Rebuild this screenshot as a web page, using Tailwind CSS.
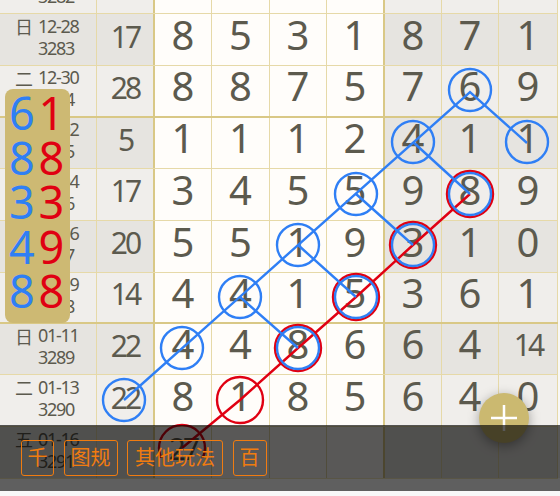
<!DOCTYPE html>
<html lang="zh">
<head>
  <meta charset="UTF-8" />
  <title>走势图</title>
  <script src="https://cdn.jsdelivr.net/npm/@tailwindcss/browser@4"></script>
</head>
<body class="bg-[#f8f8f8] font-['Noto_Sans','Noto_Sans_CJK_SC',sans-serif] text-[#5c5a4e]">
  <div class="relative h-[496px] w-[560px] overflow-hidden">
    <div id="chart" class="relative -mt-[38px] w-[558px]">
      <div id="rows"></div>
      <svg class="absolute left-0 top-[38px]" width="560" height="458" fill="none" stroke-width="2.4">
        <g stroke="#e00012">
          <circle cx="182" cy="448" r="23" />
          <circle cx="240" cy="400" r="23" />
          <circle cx="298" cy="348" r="23" />
          <circle cx="356" cy="297" r="23" />
          <circle cx="413" cy="245" r="23" />
          <circle cx="470" cy="194" r="23" />
          <polyline points="182,448 240,400 298,348 356,297 413,245 470,194" />
        </g>
        <g stroke="#2f7ff5">
          <circle cx="124" cy="400" r="21" />
          <circle cx="182" cy="348" r="21" />
          <circle cx="240" cy="297" r="21" />
          <circle cx="298" cy="245" r="21" />
          <circle cx="356" cy="194" r="21" />
          <circle cx="413" cy="142" r="21" />
          <circle cx="470" cy="90" r="21" />
          <circle cx="527" cy="142" r="21" />
          <circle cx="298" cy="348" r="21" />
          <circle cx="356" cy="297" r="21" />
          <circle cx="413" cy="245" r="21" />
          <circle cx="470" cy="194" r="21" />
          <polyline points="124,400 470,92 527,143" />
          <path d="M240 297 298 348M298 245 356 297M356 194 413 245M413 142 470 194" />
        </g>
      </svg>
    </div>

    <div class="absolute left-[5px] top-[89px] grid h-[234px] w-[65px] grid-cols-2 content-start rounded-lg bg-[#cdb973] pl-[2px] pr-[4px] pt-[2px] text-center text-[45px] leading-[44.5px]">
      <span class="text-[#2f7ff5]">6</span><span class="text-[#e00012]">1</span>
      <span class="text-[#2f7ff5]">8</span><span class="text-[#e00012]">8</span>
      <span class="text-[#2f7ff5]">3</span><span class="text-[#e00012]">3</span>
      <span class="text-[#2f7ff5]">4</span><span class="text-[#e00012]">9</span>
      <span class="text-[#2f7ff5]">8</span><span class="text-[#e00012]">8</span>
    </div>

    <button class="absolute left-[479px] top-[393px] flex h-[50px] w-[50px] items-center justify-center rounded-full bg-[#cbb970] shadow-[0_3px_12px_rgba(0,0,0,0.35)]">
      <svg width="26" height="26" stroke="#fff" stroke-width="2.5"><path d="M0 13H26M13 0V26" /></svg>
    </button>

    <div class="absolute left-0 top-[425px] flex h-[66px] w-full items-start gap-[9.5px] bg-black/65 pl-[21px] pt-[15px]">
      <div class="absolute bottom-0 left-0 h-[13px] w-full bg-white/5"></div>
      <span class="flex h-[36px] w-[33px] items-center justify-center rounded-[3px] border border-[#f07c10] text-[20px] text-[#f07c10]">千</span>
      <span class="flex h-[36px] w-[54px] items-center justify-center rounded-[3px] border border-[#f07c10] text-[20px] text-[#f07c10]">图规</span>
      <span class="flex h-[36px] w-[96px] items-center justify-center rounded-[3px] border border-[#f07c10] text-[20px] text-[#f07c10]">其他玩法</span>
      <span class="flex h-[36px] w-[34px] items-center justify-center rounded-[3px] border border-[#f07c10] text-[20px] text-[#f07c10]">百</span>
    </div>
  </div>

  <script>
    const data = [
      ["", "", "3282", "", "", "", "", "", "", "", ""],
      ["日", "12-28", "3283", "17", "8", "5", "3", "1", "8", "7", "1"],
      ["二", "12-30", "3284", "28", "8", "8", "7", "5", "7", "6", "9"],
      ["四", "01-02", "3285", "5", "1", "1", "1", "2", "4", "1", "1"],
      ["日", "01-04", "3286", "17", "3", "4", "5", "5", "9", "8", "9"],
      ["二", "01-06", "3287", "20", "5", "5", "1", "9", "3", "1", "0"],
      ["五", "01-09", "3288", "14", "4", "4", "1", "5", "3", "6", "1"],
      ["日", "01-11", "3289", "22", "4", "4", "8", "6", "6", "4", "14"],
      ["二", "01-13", "3290", "22", "8", "1", "8", "5", "6", "4", "0"],
      ["五", "01-16", "3291", "", "27", "", "", "", "", "", ""]
    ];
    const heights = [52, 52, 51.5, 51.5, 51.5, 52, 51, 51.5, 52, 52];
    const widths = ["w-[57px]", "w-[58px]", "w-[57px]", "w-[58px]", "w-[57px]", "w-[57px]", "w-[59px]"];

    const rows = document.getElementById("rows");
    data.forEach((r, i) => {
      const dark = i % 2 === 1;
      const thick = i === 2 || i === 6;
      const side = dark ? "bg-[#e6e4e0]" : "bg-[#f0eeeb]";
      const row = document.createElement("div");
      row.className = "flex " + (thick ? "border-b-2 border-[#d9c886]" : "border-b border-[#e6d9a8]");
      row.style.height = heights[i] + "px";
      let cells = `<div class="flex w-[97px] shrink-0 items-center border-r border-[#e6d9a8] pb-[5px] text-[18px] leading-[22px] ${side}">
        <span class="w-[38px] self-start pt-[2px] pl-[15px]">${r[0]}</span>
        <span class="tracking-[-1.3px]">${r[1]}<br>${r[2]}</span></div>`;
      cells += `<div class="flex w-[58px] shrink-0 items-center justify-center border-r-2 border-[#d9c886] pb-[7px] text-[30px] tracking-[-3px] ${side}">${r[3]}</div>`;
      for (let c = 0; c < 7; c++) {
        const v = r[c + 4];
        const mid = c < 4;
        const edge = c === 3 ? "border-r-2 border-[#d9c886]" : "border-r border-[#e6d9a8]";
        const size = v.length > 1 ? "text-[30px] tracking-[-3px]" : "text-[40px]";
        cells += `<div class="flex ${widths[c]} shrink-0 items-center justify-center pb-[9px] ${edge} ${size} ${mid ? "bg-[#fffdfa]" : side}">${v}</div>`;
      }
      row.innerHTML = cells;
      rows.appendChild(row);
    });
  </script>
</body>
</html>
